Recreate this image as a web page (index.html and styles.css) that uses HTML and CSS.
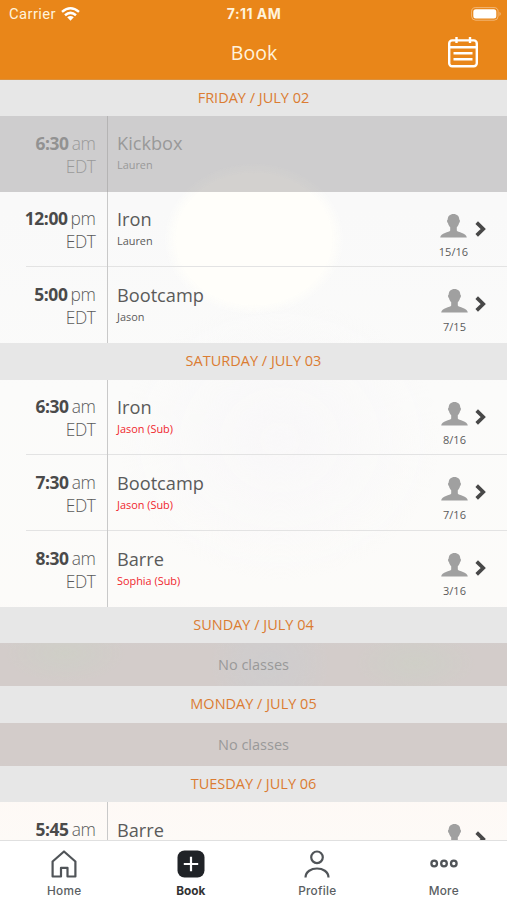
FILE: index.html
```html
<!DOCTYPE html>
<html lang="en">
<head>
<meta charset="utf-8">
<title>Book</title>
<link rel="stylesheet" href="styles.css">
</head>
<body>
<svg width="0" height="0" class="defs" aria-hidden="true">
  <symbol id="person" viewBox="0 0 27 24"><path d="M13.500 0C17 0 19.300 2.200 19.300 5.600C20.400 6 20.100 8.500 19 9.200C18.600 11 17.700 12.300 16.800 13.200V16.500C17.500 18.700 26.600 18.500 26.800 23.600H.2C.4 18.500 9.500 18.700 10.200 16.500V13.200C9.300 12.300 8.400 11 8 9.200C6.900 8.500 6.600 6 7.700 5.600C7.700 2.200 10 0 13.500 0Z" fill="#a0a0a0"/></symbol>
  <symbol id="chevron" viewBox="0 0 11 16"><path d="M1.700 1.700L8.200 8L1.700 14.300" fill="none" stroke="#484848" stroke-width="3.700"/></symbol>
</svg>
<div class="app">
  <header class="top">
    <div class="status">
      <span class="carrier">Carrier
        <svg width="19" height="14" viewBox="0 0 19 14"><g fill="none" stroke="#fff" stroke-width="2.500"><path d="M1 4.900Q9.500-2.300 18 4.900"/><path d="M4 8.200Q9.500 3.500 15 8.200"/></g><path d="M6.200 10.300Q9.500 7.700 12.800 10.300L9.500 13.700Z" fill="#fff"/></svg>
      </span>
      <span class="clock">7:11 AM</span>
      <svg class="battery" width="31" height="14" viewBox="0 0 31 14"><rect x=".6" y=".6" width="26.500" height="12.600" rx="4" fill="none" stroke="#fff" stroke-opacity=".4"/><rect x="2.300" y="2.300" width="23" height="9.300" rx="2.500" fill="#fff"/><path d="M28.500 4.800Q31 6.900 28.500 9Z" fill="#fff" fill-opacity=".45"/></svg>
    </div>
    <div class="titlebar">
      <h1>Book</h1>
      <svg class="calendar" width="30" height="31" viewBox="0 0 30 31" fill="none" stroke="#fff" stroke-width="2.400"><rect x="1.200" y="3.400" width="27.600" height="25.800" rx="3"/><path d="M1 10.300H29M8.500 0V6M22 0V6M5.500 16.300H24.500M5.500 22.300H24.500"/></svg>
    </div>
  </header>
  <main class="list">
    <h2 class="day">FRIDAY / JULY 02</h2>
    <article class="row past">
      <div class="time"><b>6:30</b> am<br>EDT</div>
      <div class="info"><h3>Kickbox</h3><p>Lauren</p></div>
    </article>
    <article class="row">
      <div class="time"><b>12:00</b> pm<br>EDT</div>
      <div class="info"><h3>Iron</h3><p>Lauren</p></div>
      <div class="spots"><svg><use href="#person"/></svg><span>15/16</span></div>
      <svg class="chevron"><use href="#chevron"/></svg>
    </article>
    <article class="row">
      <div class="time"><b>5:00</b> pm<br>EDT</div>
      <div class="info"><h3>Bootcamp</h3><p>Jason</p></div>
      <div class="spots"><svg><use href="#person"/></svg><span>7/15</span></div>
      <svg class="chevron"><use href="#chevron"/></svg>
    </article>
    <h2 class="day">SATURDAY / JULY 03</h2>
    <article class="row">
      <div class="time"><b>6:30</b> am<br>EDT</div>
      <div class="info"><h3>Iron</h3><p class="sub">Jason (Sub)</p></div>
      <div class="spots"><svg><use href="#person"/></svg><span>8/16</span></div>
      <svg class="chevron"><use href="#chevron"/></svg>
    </article>
    <article class="row">
      <div class="time"><b>7:30</b> am<br>EDT</div>
      <div class="info"><h3>Bootcamp</h3><p class="sub">Jason (Sub)</p></div>
      <div class="spots"><svg><use href="#person"/></svg><span>7/16</span></div>
      <svg class="chevron"><use href="#chevron"/></svg>
    </article>
    <article class="row">
      <div class="time"><b>8:30</b> am<br>EDT</div>
      <div class="info"><h3>Barre</h3><p class="sub">Sophia (Sub)</p></div>
      <div class="spots"><svg><use href="#person"/></svg><span>3/16</span></div>
      <svg class="chevron"><use href="#chevron"/></svg>
    </article>
    <h2 class="day">SUNDAY / JULY 04</h2>
    <p class="none">No classes</p>
    <h2 class="day">MONDAY / JULY 05</h2>
    <p class="none">No classes</p>
    <h2 class="day">TUESDAY / JULY 06</h2>
    <article class="row">
      <div class="time"><b>5:45</b> am</div>
      <div class="info"><h3>Barre</h3></div>
      <div class="spots"><svg><use href="#person"/></svg></div>
      <svg class="chevron"><use href="#chevron"/></svg>
    </article>
  </main>
  <nav class="tabs">
    <a class="tab"><svg width="28" height="28" viewBox="0 0 28 28" fill="none" stroke="#505458" stroke-width="2.200" stroke-linejoin="round"><path d="M2.600 11.500L14 1.500L25.400 11.500V26.500H17.500V17.800H11V26.500H2.600Z"/></svg>Home</a>
    <a class="tab active"><svg width="28" height="28" viewBox="0 0 28 28"><rect x=".5" y=".5" width="27" height="27" rx="7" fill="#202327"/><path d="M14 6.800V21.200M6.800 14H21.200" stroke="#fff" stroke-width="2.200"/></svg>Book</a>
    <a class="tab"><svg width="28" height="28" viewBox="0 0 28 28" fill="none" stroke="#505458" stroke-width="2.200"><circle cx="14" cy="7.300" r="5.800"/><path d="M2.500 27.500C2.800 15.500 25.200 15.500 25.500 27.500"/></svg>Profile</a>
    <a class="tab"><svg width="28" height="28" viewBox="0 0 28 28" fill="none" stroke="#505458" stroke-width="2.300"><circle cx="4.200" cy="13.500" r="2.800"/><circle cx="14" cy="13.500" r="2.800"/><circle cx="23.800" cy="13.500" r="2.800"/></svg>More</a>
  </nav>
</div>
</body>
</html>
```
FILE: styles.css
```css
* { box-sizing: border-box; }
body { margin: 0; font-family: "Open Sans", sans-serif; color: #5a5a5a; }
h1, h2, h3, p { margin: 0; font-weight: 400; }
svg { display: block; flex: none; }
.defs { position: absolute; }
.app { display: flex; flex-direction: column; height: 900px; overflow: hidden; }
.top { height: 79.500px; flex: none; background: #e98619; color: #fff3dc; border-bottom: 1px solid #dc913d; }
.status, .titlebar { display: grid; grid-template-columns: 1fr auto 1fr; align-items: center; }
.status { height: 27px; padding: 0 5px 0 9px; font: 14.800px/20px Roboto, sans-serif; }
.carrier { display: flex; align-items: center; gap: 5px; letter-spacing: .4px; }
.clock { font-weight: 700; font-family: Inter, sans-serif; font-size: 14px; letter-spacing: .45px; transform: translateX(-1.500px); }
.battery { justify-self: end; }
.titlebar { height: 50px; padding: 0 29px 0 0; }
.titlebar h1 { grid-column: 2; font-size: 19.500px; transform: translateX(15px); }
.calendar { justify-self: end; }
.list {
  flex: 1; min-height: 0; overflow: hidden;
  background:
    radial-gradient(ellipse 90px 76px at 254px 159px, #fffefa 86%, transparent 100%),
    radial-gradient(ellipse 60px 30px at 65px 573px, #fafbf0, transparent),
    radial-gradient(ellipse 60px 30px at 415px 583px, #fafbf0, transparent),
    radial-gradient(ellipse 60px 60px at 270px 585px, #f9f9f9, transparent),
    radial-gradient(ellipse 160px 140px at 280px 360px, #f9f8f9, transparent),
    linear-gradient(#f9f9f9 130px, #fbfbfa 310px, #fcfbf9 520px, #fff8f4 570px, #fff8f4 680px, #fdfaf7);
}
.day { height: 36.400px; background: rgba(230, 230, 230, .97); color: #db7c32; font-size: 14.500px; line-height: 36px; text-align: center; }
.row { display: flex; height: 75.800px; background: linear-gradient(#e3e3e3, #e3e3e3) 26px 100% / 100% 1px no-repeat; }
.row:has(+ .day) { background: none; }
.past { background: rgba(60, 55, 60, .225); color: #999; }
.time { width: 107.500px; flex: none; padding: 15.700px 11px 0 0; border-right: 1.500px solid #c9c9c9; text-align: right; font-size: 17.400px; font-weight: 300; line-height: 23px; letter-spacing: -.4px; word-spacing: -1px; }
.past .time { border-color: #b5b4b4; }
.time b { font-weight: 700; color: #4a4a4a; }
.past b { color: #929292; }
.info { flex: 1; padding: 16.300px 0 0 9.500px; }
.info h3 { font-size: 18.200px; line-height: 22px; }
.info p { font-size: 10.900px; line-height: 20px; margin-top: 1px; }
.info .sub { color: #f0262d; }
.spots { display: flex; flex-direction: column; align-items: center; padding-top: 22px; font-size: 11px; line-height: 16px; }
.spots svg { width: 27px; height: 24px; margin-bottom: 6px; }
.chevron { width: 11px; height: 16px; margin: 29px 21px 0 7px; }
.none { height: 43px; background: rgba(60, 55, 60, .225); color: #999; font-size: 14.500px; line-height: 43px; text-align: center; }
.tabs { display: flex; flex: none; height: 60px; background: #fff; border-top: 1px solid #e0e0e0; padding-left: 1px; }
.tab { flex: 1; display: flex; flex-direction: column; align-items: center; gap: 5px; padding-top: 9px; font: 500 11.800px/17px Inter, sans-serif; letter-spacing: .25px; color: #5a5e62; }
.active { color: #333; font-weight: 700; letter-spacing: 0; }
```
